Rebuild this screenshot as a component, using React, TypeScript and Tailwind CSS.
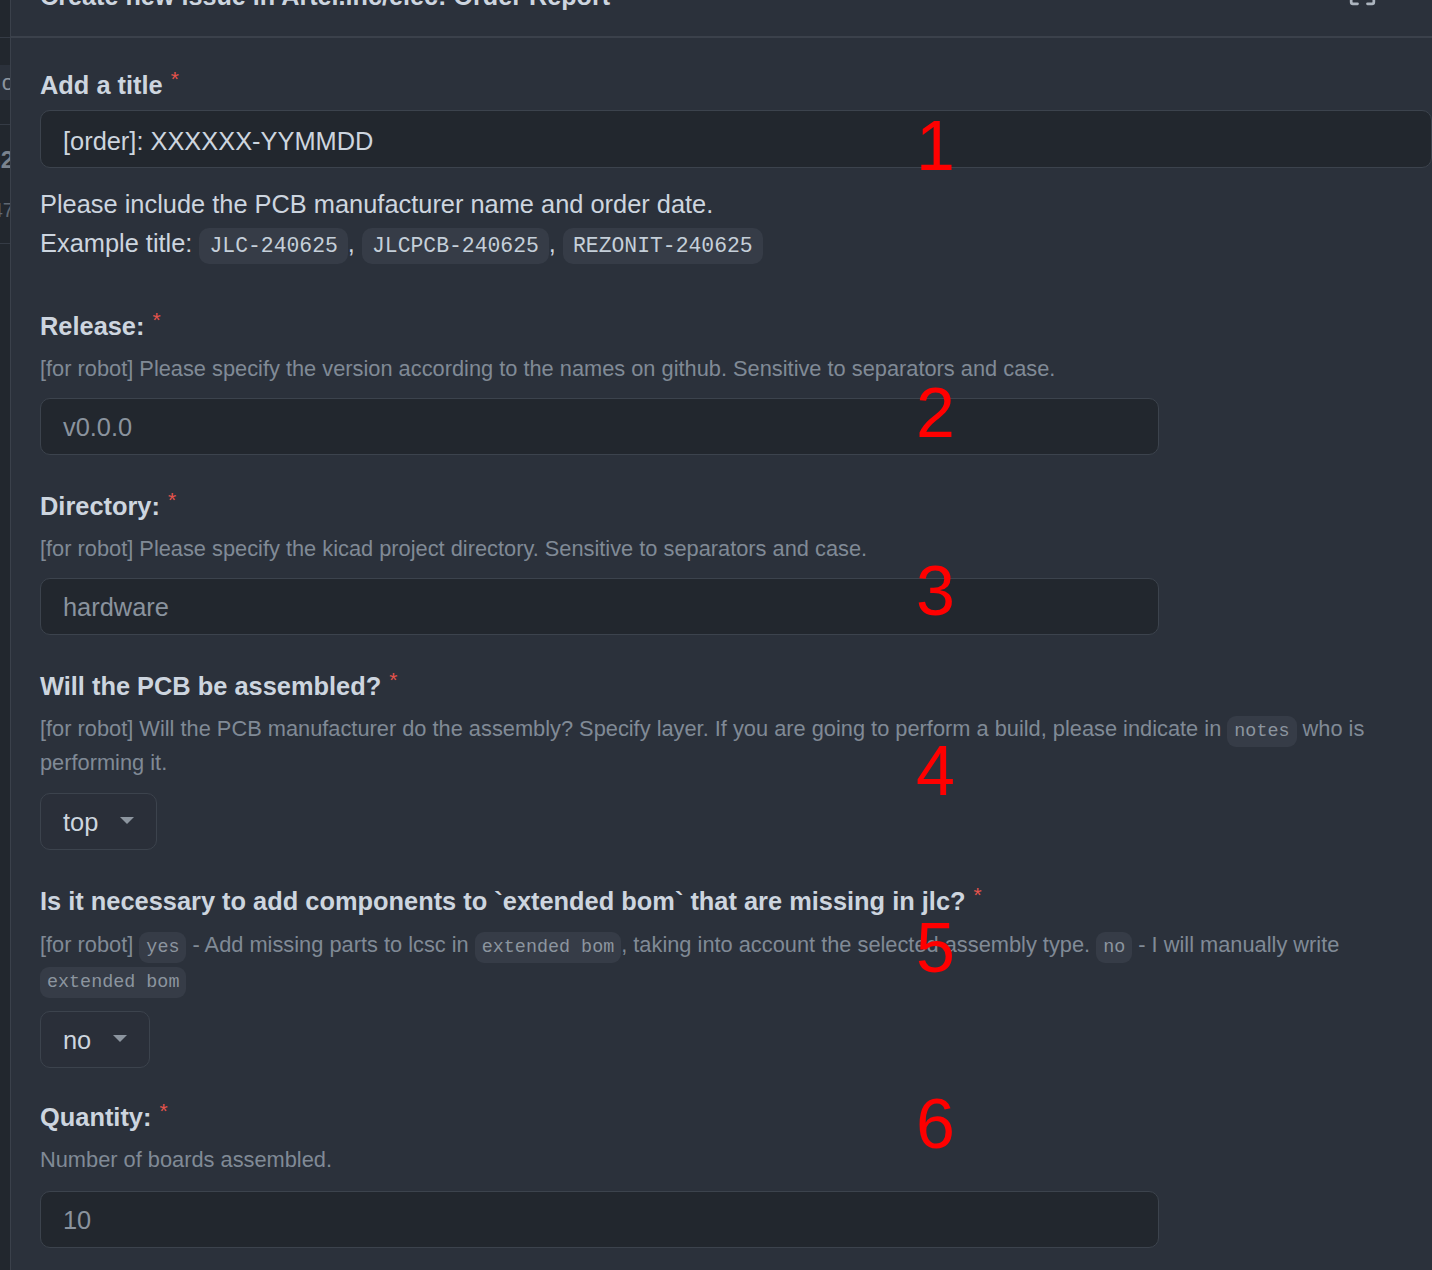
import React from 'react';

const sans = { fontFamily: '"Liberation Sans", Arial, sans-serif' };

function Code({ children, big }: { children: React.ReactNode; big?: boolean }) {
  return (
    <code
      className={
        big
          ? 'whitespace-nowrap rounded-[10px] bg-[#363c47] px-[10px] py-[6px] text-[21.4px] leading-none text-[#c5cfd9]'
          : 'whitespace-nowrap rounded-[9px] bg-[#363c47] px-[7px] py-[5px] text-[18.4px] leading-none text-[#8c959f]'
      }
      style={{ fontFamily: '"Liberation Mono", "Courier New", monospace' }}
    >
      {children}
    </code>
  );
}

function Label({ text }: { text: string }) {
  return (
    <div className="text-[25.4px] leading-[36px] font-bold text-[#cdd5df]">
      {text}
      <span className="ml-[8px] align-top text-[21px] leading-[24px] font-normal text-[#e5534b]">*</span>
    </div>
  );
}

function TextInput({ value }: { value: string }) {
  return (
    <div className="flex h-[57px] w-[1119px] items-center rounded-[10px] border border-[#3c434d] bg-[#22272e] px-[22px] pt-[2px] text-[25.4px] text-[#8a939e]">
      {value}
    </div>
  );
}

function Select({ value }: { value: string }) {
  return (
    <div className="inline-flex h-[57px] items-center gap-[22px] rounded-[10px] border border-[#3c434d] bg-[#2a2f39] pl-[22px] pr-[22px] pt-[2px] text-[25.4px] text-[#cdd5df]">
      <span>{value}</span>
      <svg width="14" height="8" viewBox="0 0 14 8" className="-mt-[4px]">
        <polygon points="0,0 14,0 7,7" fill="#8c959f" />
      </svg>
    </div>
  );
}

// red annotation numbers drawn over the form
const marks = [
  { n: '1', top: 111 },
  { n: '2', top: 378 },
  { n: '3', top: 556 },
  { n: '4', top: 736 },
  { n: '5', top: 913 },
  { n: '6', top: 1089 },
];

export default function App() {
  return (
    <div
      className="relative flex h-[1270px] w-[1432px] overflow-hidden bg-[#2b313b]"
      style={sans}
    >
      {/* sidebar strip cut off on the left */}
      <div className="flex w-[10px] shrink-0 flex-col bg-[#22272e] text-[#8c959f]">
        <div className="h-[38px] border-b border-[#353b45]" />
        <div className="h-[27px]" />
        <div className="flex h-[35px] items-center justify-end overflow-hidden bg-[#2b313b] text-[22px]">
          <span className="-mr-[4px]">o</span>
        </div>
        <div className="h-[25px] border-b border-[#353b45]" />
        <div className="flex h-[70px] items-center justify-end overflow-hidden text-[24px] font-bold text-[#7a838e]">
          <span className="-mr-[4px]">32</span>
        </div>
        <div className="flex h-[48px] items-start justify-end overflow-hidden text-[20px] text-[#5f6873]">
          <span className="-mr-[4px]">47</span>
        </div>
        <div className="border-b border-[#353b45]" />
      </div>

      <div className="flex min-w-0 flex-1 flex-col border-l border-[#3b414b]">
        <div className="flex h-[38px] shrink-0 items-start justify-between border-b-2 border-[#3b414b] pl-[29px] pr-[55px]">
          <div className="-mt-[22px] text-[25.2px] leading-[36px] font-bold text-[#cdd5df]">
            Create new issue in Artel.inc/elec: Order Report
          </div>
          <svg className="-mt-[22px]" width="29" height="29" viewBox="0 0 16 16" fill="#adb5bf">
            <path d="M1.75 10a.75.75 0 0 1 .75.75v2.5c0 .138.112.25.25.25h2.5a.75.75 0 0 1 0 1.5h-2.5A1.75 1.75 0 0 1 1 13.250v-2.5a.75.75 0 0 1 .75-.75Zm12.5 0a.75.75 0 0 1 .75.75v2.5A1.75 1.75 0 0 1 13.25 15h-2.5a.75.75 0 0 1 0-1.5h2.5a.25.25 0 0 0 .25-.25v-2.5a.75.75 0 0 1 .75-.75ZM2.75 2.5a.25.25 0 0 0-.25.25v2.5a.75.75 0 0 1-1.5 0v-2.5C1 1.784 1.784 1 2.75 1h2.5a.75.75 0 0 1 0 1.5ZM10.75 1h2.5c.966 0 1.75.784 1.75 1.75v2.5a.75.75 0 0 1-1.5 0v-2.5a.25.25 0 0 0-.25-.25h-2.5a.75.75 0 0 1 0-1.5Z" />
          </svg>
        </div>

        <div className="flex flex-col pl-[29px] pt-[29px]">
          {/* title */}
          <Label text="Add a title" />
          <div className="mt-[7px] flex h-[58px] w-full items-center rounded-[10px] border border-[#3c434d] bg-[#22272e] px-[22px] pt-[4px] text-[25.4px] text-[#cdd5df]">
            [order]: XXXXXX-YYMMDD
          </div>
          <div className="mt-[17px] text-[25.4px] leading-[39px] text-[#cdd5df]">
            <div>Please include the PCB manufacturer name and order date.</div>
            <div>
              Example title: <Code big>JLC-240625</Code>, <Code big>JLCPCB-240625</Code>,{' '}
              <Code big>REZONIT-240625</Code>
            </div>
          </div>

          {/* release */}
          <div className="mt-[45px]">
            <Label text="Release:" />
          </div>
          <div className="mt-[8px] text-[21.8px] leading-[34px] text-[#808a96]">
            [for robot] Please specify the version according to the names on github. Sensitive to separators and case.
          </div>
          <div className="mt-[12px]">
            <TextInput value="v0.0.0" />
          </div>

          {/* directory */}
          <div className="mt-[33px]">
            <Label text="Directory:" />
          </div>
          <div className="mt-[8px] text-[21.8px] leading-[34px] text-[#808a96]">
            [for robot] Please specify the kicad project directory. Sensitive to separators and case.
          </div>
          <div className="mt-[12px]">
            <TextInput value="hardware" />
          </div>

          {/* assembled */}
          <div className="mt-[33px]">
            <Label text="Will the PCB be assembled?" />
          </div>
          <div className="mt-[8px] text-[21.8px] leading-[34px] text-[#808a96]">
            [for robot] Will the PCB manufacturer do the assembly? Specify layer. If you are going to perform a build,
            please indicate in <Code>notes</Code> who is performing it.
          </div>
          <div className="mt-[13px]">
            <Select value="top" />
          </div>

          {/* extended bom */}
          <div className="mt-[33px]">
            <Label text="Is it necessary to add components to `extended bom` that are missing in jlc?" />
          </div>
          <div className="mt-[8px] text-[21.8px] leading-[35px] text-[#808a96]">
            [for robot] <Code>yes</Code> - Add missing parts to lcsc in <Code>extended bom</Code>, taking into account the
            selected assembly type. <Code>no</Code> - I will manually write <Code>extended bom</Code>
          </div>
          <div className="mt-[14px]">
            <Select value="no" />
          </div>

          {/* quantity */}
          <div className="mt-[31px]">
            <Label text="Quantity:" />
          </div>
          <div className="mt-[8px] text-[21.8px] leading-[34px] text-[#808a96]">Number of boards assembled.</div>
          <div className="mt-[14px]">
            <TextInput value="10" />
          </div>
        </div>
      </div>

      {marks.map(m => (
        <div
          key={m.n}
          className="absolute left-[916px] w-[39px] text-center text-[70px] leading-[70px] text-[#ff0000]"
          style={{ top: m.top }}
        >
          {m.n}
        </div>
      ))}
    </div>
  );
}
